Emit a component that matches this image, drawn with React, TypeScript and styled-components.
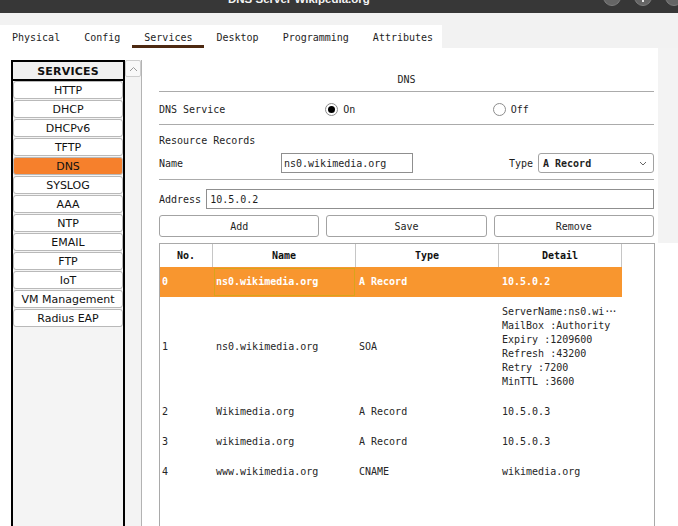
import React from "react";
import styled, { createGlobalStyle, css } from "styled-components";

const Global = createGlobalStyle`
  html, body { margin: 0; padding: 0; background: #ffffff; }
  body {
    width: 678px; height: 526px; overflow: hidden;
    font-family: "DejaVu Sans Mono", "Liberation Mono", monospace;
    font-size: 10px; color: #1e1e1e;
  }
  * { box-sizing: border-box; }
`;

const Window = styled.div`
  width: 678px; height: 526px; display: flex; flex-direction: column; overflow: hidden;
`;

const TitleBar = styled.div`
  height: 13px; flex: none; background: #373737; display: flex; align-items: flex-end; overflow: hidden;
`;
const Title = styled.span`
  margin-left: 228px; margin-bottom: 8px; line-height: 11px;
  font-family: "Liberation Sans", "DejaVu Sans", sans-serif; font-weight: bold; font-size: 11.5px; color: #f4f4f4;
  white-space: nowrap;
`;
const Controls = styled.div`
  margin-left: auto; margin-right: -5px; margin-bottom: 7px; display: flex; gap: 13px;
`;
const Dot = styled.span<{ $mark?: boolean }>`
  width: 18px; height: 18px; border-radius: 50%; background: #656565; border: 1px solid #7d7d7d;
  display: flex; justify-content: center; align-items: flex-end;
  ${(p) => p.$mark && css`
    &::after { content: ""; width: 1.5px; height: 5px; background: #e6e6e6; margin-bottom: 3px; }
  `}
`;

const TabBand = styled.div`
  flex: none; background: #f2f2f2; padding-top: 12px;
`;
const TabStrip = styled.div`
  display: flex; width: 442px; height: 23px; background: #ffffff;
`;
const Tab = styled.div<{ $active?: boolean }>`
  padding: 0 12px; display: flex; align-items: center; padding-top: 1px;
  color: #1e1e1e; white-space: nowrap;
  ${(p) => p.$active && css`box-shadow: inset 0 -3px 0 #4d2911;`}
`;

const Main = styled.div`
  flex: 1; display: flex; background: #ffffff; overflow: hidden;
`;

const SidePane = styled.div`
  flex: none; width: 142px; display: flex; padding: 12px 0 0 11px;
`;
const ServiceList = styled.div`
  width: 114px; border-left: 2px solid #000; border-right: 2px solid #000; background: #f4f4f4;
  display: flex; flex-direction: column;
  font-family: "DejaVu Sans", Verdana, sans-serif; font-size: 11px; color: #111;
`;
const ListHeader = styled.div`
  height: 21px; border-top: 2px solid #000; border-bottom: 2px solid #000; background: #f0f0f0;
  display: flex; align-items: center; justify-content: center; font-weight: bold; letter-spacing: 0.2px;
  padding-top: 1px;
`;
const ServiceButton = styled.div<{ $active?: boolean }>`
  height: 18px; margin-bottom: 1px; border: 1px solid #b9b9b9; border-radius: 3px;
  background: ${(p) => (p.$active ? "#f6802c" : "#ffffff")};
  display: flex; align-items: center; justify-content: center; white-space: nowrap; padding-top: 1px;
`;
const ScrollTrack = styled.div`
  width: 17px; background: #f3f3f3; border-right: 1px solid #b3b3b3;
`;
const ScrollUp = styled.div`
  width: 16px; height: 17px; border: 1px solid #cdcdcd; border-radius: 2px; background: #f8f8f8;
  display: flex; align-items: center; justify-content: center;
`;

const Content = styled.div`
  flex: 1; display: flex; flex-direction: column; min-width: 0;
`;
const FormArea = styled.div`
  display: flex; flex: none;
`;
const Form = styled.div`
  width: 516px; padding: 0 4px 6px 17px; display: flex; flex-direction: column;
`;
const Gutter = styled.div`
  flex: 1; background: #f3f3f3;
`;
const Heading = styled.div`
  height: 44px; border-bottom: 1px solid #ababab; display: flex; align-items: flex-end; justify-content: center;
  padding-bottom: 5px; line-height: 12px;
`;
const ServiceRow = styled.div`
  height: 33px; border-bottom: 1px solid #ababab; display: grid; grid-template-columns: repeat(3, 1fr);
  column-gap: 7px; align-items: center; padding-top: 3px;
`;
const RadioLabel = styled.label`
  display: flex; align-items: center; gap: 5px;
`;
const Radio = styled.span<{ $on?: boolean }>`
  width: 13px; height: 13px; border-radius: 50%; border: 1px solid #8d8d8d; background: #fff;
  display: flex; align-items: center; justify-content: center; margin-left: -1px;
  ${(p) => p.$on && css`
    &::after { content: ""; width: 7px; height: 7px; border-radius: 50%; background: #000; }
  `}
`;
const SectionLabel = styled.div`
  padding-top: 10px; line-height: 12px;
`;
const NameRow = styled.div`
  margin-top: 6px; padding-bottom: 6px; border-bottom: 1px solid #ababab; display: flex; align-items: center;
`;
const FieldLabel = styled.span<{ $w?: number }>`
  ${(p) => p.$w && css`width: ${p.$w}px;`} flex: none; white-space: nowrap;
`;
const TextInput = styled.input<{ $w?: number }>`
  height: 20px; border: 1px solid #8f8f8f; border-radius: 0; background: #fff; outline: none;
  font-family: "DejaVu Sans Mono", monospace; font-size: 10px; color: #1e1e1e; padding: 0 2px;
  ${(p) => (p.$w ? css`width: ${p.$w}px;` : css`flex: 1; min-width: 0; padding: 0 3px;`)}
`;
const TypeGroup = styled.div`
  margin-left: auto; display: flex; align-items: center; gap: 5px;
`;
const Select = styled.div`
  width: 116px; height: 20px; border: 1px solid #a2a2a2; border-radius: 3px; background: #fff;
  display: flex; align-items: center; justify-content: space-between; padding: 0 6px 0 4px; font-weight: bold;
`;
const AddressRow = styled.div`
  padding-top: 9px; display: flex; align-items: center; gap: 5px;
`;
const ButtonRow = styled.div`
  margin-top: 6px; display: grid; grid-template-columns: repeat(3, 1fr); column-gap: 7px;
`;
const Button = styled.button`
  height: 22px; border: 1px solid #a3a3a3; border-radius: 3px; background: #fff; padding: 0;
  font-family: "DejaVu Sans Mono", monospace; font-size: 10px; color: #1e1e1e;
`;

const TableSection = styled.div`
  flex: 1; padding: 0 23px 0 17px;
`;
const TableBox = styled.div`
  height: 320px; border: 1px solid #a9a9a9; background: #fff;
`;
const COLS = "53px 143px 143px 123px 1fr";
const HeaderRow = styled.div`
  display: grid; grid-template-columns: ${COLS}; height: 23px;
`;
const HeadCell = styled.div<{ $last?: boolean }>`
  border-right: ${(p) => (p.$last ? "none" : "1px solid #c6c6c6")};
  display: flex; align-items: center; justify-content: center; font-weight: bold; color: #111;
`;
const Row = styled.div<{ $h: number }>`
  display: grid; grid-template-columns: ${COLS}; height: ${(p) => p.$h}px;
`;
const Cell = styled.div<{ $sel?: boolean; $focus?: boolean; $pad?: number }>`
  display: flex; flex-direction: column; justify-content: center; padding-left: ${(p) => p.$pad ?? 3}px;
  white-space: nowrap; overflow: hidden; line-height: 14px; color: #262626;
  ${(p) => p.$sel && css`background: #f8962f; color: #ffffff; font-weight: bold;`}
  ${(p) => p.$focus && css`outline: 1px solid #d8a41c; outline-offset: -2px;`}
`;
const Dots = styled.span`
  letter-spacing: -2.5px;
`;

const tabs = ["Physical", "Config", "Services", "Desktop", "Programming", "Attributes"];
const services = ["HTTP", "DHCP", "DHCPv6", "TFTP", "DNS", "SYSLOG", "AAA", "NTP", "EMAIL", "FTP", "IoT", "VM Management", "Radius EAP"];

type Rec = { no: string; name: string; type: string; detail: React.ReactNode[]; h: number };
const records: Rec[] = [
  { no: "0", name: "ns0.wikimedia.org", type: "A Record", detail: ["10.5.0.2"], h: 30 },
  {
    no: "1", name: "ns0.wikimedia.org", type: "SOA", h: 100,
    detail: [
      <>ServerName:ns0.wi<Dots>···</Dots></>,
      "MailBox :Authority", "Expiry :1209600", "Refresh :43200", "Retry :7200", "MinTTL :3600",
    ],
  },
  { no: "2", name: "Wikimedia.org", type: "A Record", detail: ["10.5.0.3"], h: 30 },
  { no: "3", name: "wikimedia.org", type: "A Record", detail: ["10.5.0.3"], h: 30 },
  { no: "4", name: "www.wikimedia.org", type: "CNAME", detail: ["wikimedia.org"], h: 30 },
];

export default function App() {
  return (
    <>
      <Global />
      <Window>
        <TitleBar>
          <Title>DNS Server Wikipedia.org</Title>
          <Controls>
            <Dot />
            <Dot $mark />
            <Dot />
          </Controls>
        </TitleBar>
        <TabBand>
          <TabStrip>
            {tabs.map((t) => (
              <Tab key={t} $active={t === "Services"}>{t}</Tab>
            ))}
          </TabStrip>
        </TabBand>
        <Main>
          <SidePane>
            <ServiceList>
              <ListHeader>SERVICES</ListHeader>
              {services.map((s) => (
                <ServiceButton key={s} $active={s === "DNS"}>{s}</ServiceButton>
              ))}
            </ServiceList>
            <ScrollTrack>
              <ScrollUp>
                <svg width="9" height="6" viewBox="0 0 9 6">
                  <path d="M1 5 L4.5 1.5 L8 5" fill="none" stroke="#9a9a9a" strokeWidth="1" />
                </svg>
              </ScrollUp>
            </ScrollTrack>
          </SidePane>
          <Content>
            <FormArea>
              <Form>
                <Heading>DNS</Heading>
                <ServiceRow>
                  <span>DNS Service</span>
                  <RadioLabel><Radio $on />On</RadioLabel>
                  <RadioLabel><Radio />Off</RadioLabel>
                </ServiceRow>
                <SectionLabel>Resource Records</SectionLabel>
                <NameRow>
                  <FieldLabel $w={122}>Name</FieldLabel>
                  <TextInput $w={132} defaultValue="ns0.wikimedia.org" readOnly />
                  <TypeGroup>
                    <FieldLabel>Type</FieldLabel>
                    <Select>
                      <span>A Record</span>
                      <svg width="8" height="5" viewBox="0 0 8 5">
                        <path d="M1 1 L4 4 L7 1" fill="none" stroke="#555" strokeWidth="0.9" />
                      </svg>
                    </Select>
                  </TypeGroup>
                </NameRow>
                <AddressRow>
                  <FieldLabel>Address</FieldLabel>
                  <TextInput defaultValue="10.5.0.2" readOnly />
                </AddressRow>
                <ButtonRow>
                  <Button>Add</Button>
                  <Button>Save</Button>
                  <Button>Remove</Button>
                </ButtonRow>
              </Form>
              <Gutter />
            </FormArea>
            <TableSection>
              <TableBox>
                <HeaderRow>
                  <HeadCell>No.</HeadCell>
                  <HeadCell>Name</HeadCell>
                  <HeadCell>Type</HeadCell>
                  <HeadCell>Detail</HeadCell>
                  <HeadCell $last />
                </HeaderRow>
                {records.map((r, i) => {
                  const sel = i === 0;
                  return (
                    <Row key={r.no} $h={r.h}>
                      <Cell $sel={sel} $pad={2}>{r.no}</Cell>
                      <Cell $sel={sel} $focus={sel}>{r.name}</Cell>
                      <Cell $sel={sel}>{r.type}</Cell>
                      <Cell $sel={sel}>
                        {r.detail.map((d, k) => (
                          <div key={k}>{d}</div>
                        ))}
                      </Cell>
                      <Cell />
                    </Row>
                  );
                })}
              </TableBox>
            </TableSection>
          </Content>
        </Main>
      </Window>
    </>
  );
}
